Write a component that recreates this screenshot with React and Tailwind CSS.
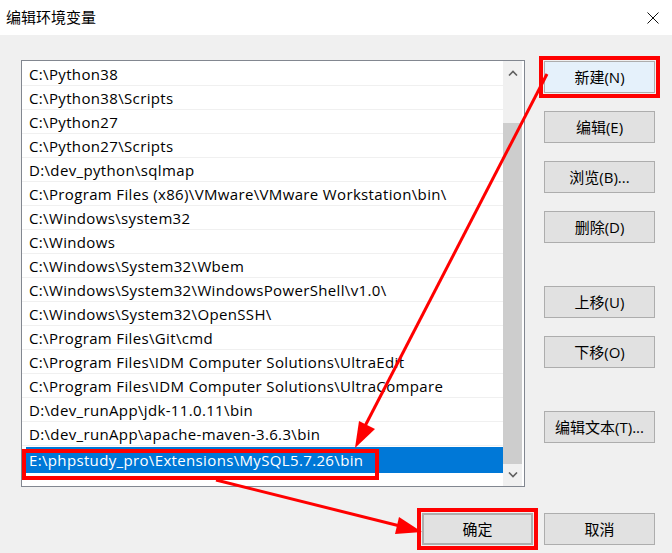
const paths = [
  "C:\\Python38",
  "C:\\Python38\\Scripts",
  "C:\\Python27",
  "C:\\Python27\\Scripts",
  "D:\\dev_python\\sqlmap",
  "C:\\Program Files (x86)\\VMware\\VMware Workstation\\bin\\",
  "C:\\Windows\\system32",
  "C:\\Windows",
  "C:\\Windows\\System32\\Wbem",
  "C:\\Windows\\System32\\WindowsPowerShell\\v1.0\\",
  "C:\\Windows\\System32\\OpenSSH\\",
  "C:\\Program Files\\Git\\cmd",
  "C:\\Program Files\\IDM Computer Solutions\\UltraEdit",
  "C:\\Program Files\\IDM Computer Solutions\\UltraCompare",
  "D:\\dev_runApp\\jdk-11.0.11\\bin",
  "D:\\dev_runApp\\apache-maven-3.6.3\\bin",
];

const Btn = ({ children, className = "" }) => (
  <button
    className={`w-[111px] h-[32px] flex items-center justify-center bg-[#e1e1e1] border border-[#adadad] text-[15px] text-black ${className}`}
  >
    {children}
  </button>
);

const Chevron = ({ up }) => (
  <svg width="10" height="6" viewBox="0 0 10 6">
    <path
      d={up ? "M1 5.5 L5 1.5 L9 5.5" : "M1 0.5 L5 4.5 L9 0.5"}
      fill="none"
      stroke="#606060"
      strokeWidth="1.6"
    />
  </svg>
);

export default function App() {
  return (
    <div className="relative w-[672px] h-[553px] bg-[#f0f0f0] overflow-hidden font-['Open_Sans','Noto_Sans_CJK_SC',sans-serif]">
      {/* title bar */}
      <div className="h-[35px] bg-white flex items-center justify-between pl-[6px] pr-[13px]">
        <span className="text-[15px] text-black font-['Noto_Sans_CJK_SC',sans-serif]">编辑环境变量</span>
        <svg width="12" height="12" viewBox="0 0 12 12">
          <path d="M0.5 0.5 L11.5 11.5 M11.5 0.5 L0.5 11.5" stroke="#111" strokeWidth="1" />
        </svg>
      </div>

      <div className="flex pt-[25px] pl-[21px]">
        {/* path list */}
        <div className="w-[504px] h-[427px] border border-[#828790] bg-white flex">
          <div className="flex-1 flex flex-col pt-[1px]">
            {paths.map((p) => (
              <div
                key={p}
                className="h-[24px] border-b border-[#f0f0f0] pl-[7px] pt-[1px] flex items-center text-[15px] tracking-[0.35px] text-black whitespace-nowrap"
              >
                {p}
              </div>
            ))}
            <div className="mt-[1px] ml-[4px] h-[26px] bg-[#0078d7] pl-[3px] flex items-center text-[15px] tracking-[0.35px] text-white whitespace-nowrap">
              E:\phpstudy_pro\Extensions\MySQL5.7.26\bin
            </div>
          </div>
          <div className="w-[19px] mr-[2px] bg-[#f0f0f0] flex flex-col items-center">
            <div className="h-[24px] flex items-center justify-center">
              <Chevron up />
            </div>
            <div className="w-full mt-[38px] h-[341px] bg-[#cdcdcd]" />
            <div className="flex-1 flex items-center justify-center">
              <Chevron />
            </div>
          </div>
        </div>

        {/* side buttons */}
        <div className="ml-[19px] pt-[1px] flex flex-col">
          <Btn className="h-[31px] bg-[#e5f1fb] border-[#0078d7] outline-4 outline-[#ff0000] outline-offset-1">
            新建(N)
          </Btn>
          <Btn className="mt-[18px]">编辑(E)</Btn>
          <Btn className="mt-[18px]">浏览(B)...</Btn>
          <Btn className="mt-[18px]">删除(D)</Btn>
          <Btn className="mt-[43px]">上移(U)</Btn>
          <Btn className="mt-[18px]">下移(O)</Btn>
          <Btn className="mt-[43px]">编辑文本(T)...</Btn>
        </div>
      </div>

      {/* bottom buttons */}
      <div className="flex justify-end gap-[11px] pr-[17px] pt-[26px]">
        <Btn className="w-[110px] border-2 border-[#0078d7] outline-4 outline-[#ff0000] outline-offset-1">
          确定
        </Btn>
        <Btn>取消</Btn>
      </div>

      {/* annotation: red box around edited entry */}
      <div className="absolute left-[22px] top-[449px] w-[357px] h-[31px] border-4 border-[#ff0000] pointer-events-none" />

      {/* annotation arrows */}
      <svg className="absolute inset-0 pointer-events-none" width="672" height="553">
        <line x1="547" y1="74" x2="364" y2="428" stroke="#ff0000" strokeWidth="3" />
        <polygon points="355,448 375,429 359,421" fill="#ff0000" />
        <line x1="216" y1="480" x2="400" y2="526" stroke="#ff0000" strokeWidth="3" />
        <polygon points="422,532 395,534 399,517" fill="#ff0000" />
      </svg>
    </div>
  );
}
